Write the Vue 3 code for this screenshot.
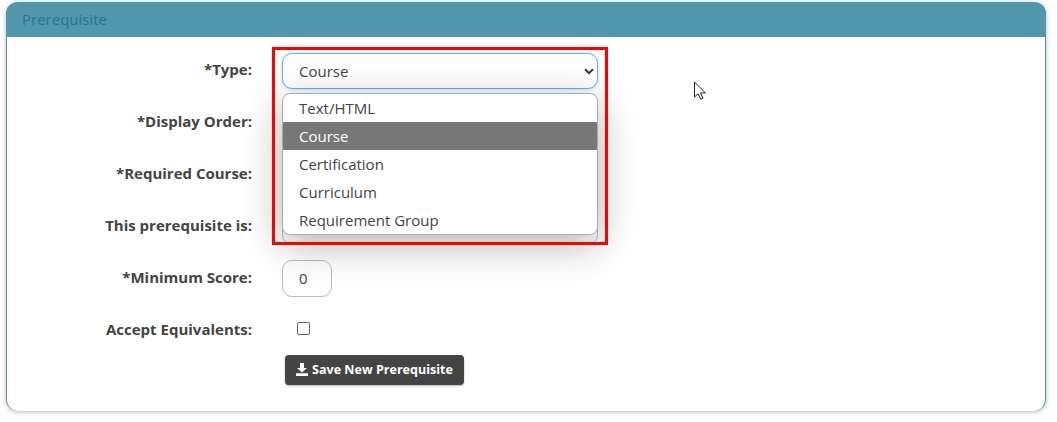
<script setup>
const options = ['Text/HTML', 'Course', 'Certification', 'Curriculum', 'Requirement Group']
</script>

<template>
  <div class="page">
    <section class="panel">
      <header class="head">Prerequisite</header>
      <form class="form" @submit.prevent>
        <div class="row">
          <label class="lab">*Type:</label>
          <div class="field wide focus"><span>Course</span>
            <svg class="chev" width="10" height="7" viewBox="0 0 10 7"><path d="M1 1.2 5 5.2 9 1.2" fill="none" stroke="#333" stroke-width="2"/></svg>
          </div>
        </div>
        <div class="row">
          <label class="lab">*Display Order:</label>
          <div class="field small"></div>
        </div>
        <div class="row">
          <label class="lab">*Required Course:</label>
          <div class="field wide"></div>
        </div>
        <div class="row">
          <label class="lab">This prerequisite is:</label>
          <div class="field wide"></div>
        </div>
        <div class="row">
          <label class="lab">*Minimum Score:</label>
          <div class="field small"><span>0</span></div>
        </div>
        <div class="row">
          <label class="lab">Accept Equivalents:</label>
          <div class="checkcell"><span class="check"></span></div>
        </div>
        <div class="actions">
          <button class="save" type="button">
            <svg width="14" height="13" viewBox="0 0 14 13"><path d="M5 0h4v5h3L7 9.6 2 5h3zM1 10.2h12V13H1z" fill="#fff"/></svg>
            Save New Prerequisite
          </button>
        </div>
      </form>

      <div class="marker"></div>
      <ul class="menu">
        <li v-for="o in options" :key="o" :class="{ on: o === 'Course' }">{{ o }}</li>
      </ul>
      <svg class="cursor" width="14" height="20" viewBox="0 0 14 20">
        <path d="M1.5 1v15l3.6-3.3 2.5 5.6 2.4-1-2.5-5.4h4.9z" fill="#fff" stroke="#222" stroke-width="1"/>
      </svg>
    </section>
  </div>
</template>

<style>
html, body { margin: 0; background: #fff; }
</style>

<style scoped>
.page {
  width: 1057px;
  height: 422px;
  padding: 2px 11px 0 6px;
  box-sizing: border-box;
  font-family: "Open Sans", sans-serif;
  font-size: 15px;
  color: #444;
  overflow: hidden;
}
.panel {
  position: relative;
  height: 409px;
  box-sizing: border-box;
  border: 1px solid #5097ab;
  border-top: 0;
  border-bottom: 0;
  border-radius: 12px;
  background: #fff;
  box-shadow: 0 1px 5px rgba(0, 0, 0, .28);
}
.head {
  height: 35px;
  margin: 0 -1px;
  padding-left: 16px;
  line-height: 35px;
  background: #5097ab;
  color: #33718d;
  border-radius: 12px 12px 0 0;
}
.form {
  display: flex;
  flex-direction: column;
  padding-top: 7px;
}
.row {
  display: flex;
  align-items: center;
  height: 52px;
  gap: 30px;
}
.lab {
  width: 245px;
  flex: none;
  text-align: right;
  font-weight: 700;
  font-size: 15px;
  color: #444;
  position: relative;
  top: -1px;
}
.field {
  box-sizing: border-box;
  height: 37px;
  display: flex;
  align-items: center;
  padding-left: 16px;
  border: 1px solid #bbb;
  border-radius: 10px;
  background: #fff;
}
.wide { width: 316px; }
.small { width: 50px; }
.focus {
  position: relative;
  height: 36px;
  margin-top: 1px;
  border-color: #66afe9;
  box-shadow: 0 0 4px rgba(102, 175, 233, .4);
}
.chev { position: absolute; right: 3px; top: 14px; }
.checkcell { padding-left: 15px; display: flex; margin-top: -3px; }
.check {
  width: 11px;
  height: 11px;
  border: 1px solid #666;
  border-radius: 2px;
  background: #fff;
}
.actions { padding: 0 0 0 278px; margin-top: -1px; }
.save {
  display: inline-flex;
  align-items: center;
  gap: 3px;
  height: 30px;
  width: 179px;
  padding: 0 0 1px 10px;
  border: 0;
  border-radius: 4px;
  background: #444;
  color: #fff;
  font: 700 12.55px "Open Sans", sans-serif;
  box-shadow: 0 1px 2px rgba(0, 0, 0, .3);
}
.marker {
  position: absolute;
  left: 265px;
  top: 45px;
  width: 336px;
  height: 198px;
  box-sizing: border-box;
  border: 3px solid #f00;
  pointer-events: none;
  z-index: 2;
}
.menu {
  position: absolute;
  left: 275px;
  top: 91px;
  width: 316px;
  height: 142px;
  box-sizing: border-box;
  margin: 0;
  padding: 0;
  list-style: none;
  border: 1px solid #aaa;
  border-radius: 8px;
  background: #fff;
  overflow: hidden;
  z-index: 1;
  box-shadow: 0 10px 40px rgba(0, 0, 0, .3);
}
.menu li {
  height: 28px;
  line-height: 28px;
  padding-left: 16px;
}
.menu li.on {
  background: #777;
  color: #fff;
}
.cursor {
  position: absolute;
  left: 686px;
  top: 79px;
}
</style>
